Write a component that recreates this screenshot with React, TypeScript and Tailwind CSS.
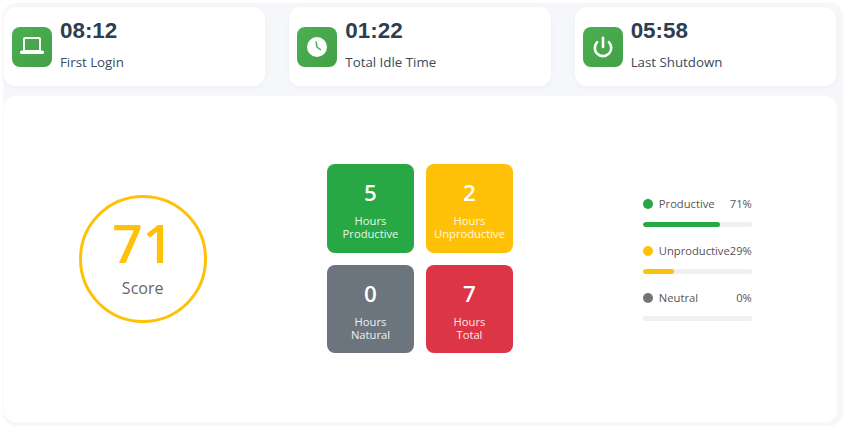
import { Power } from 'lucide-react';
import type { ReactNode } from 'react';

const sans = 'font-["Open_Sans",sans-serif]';

function LaptopIcon() {
  return (
    <svg width="24" height="24" viewBox="0 0 24 24" fill="none">
      <rect x="4" y="3" width="16" height="13" rx="1" stroke="white" strokeWidth="2" />
      <rect x="0" y="15.5" width="24" height="3.5" rx="1.5" fill="white" />
    </svg>
  );
}

function ClockIcon() {
  return (
    <svg width="20" height="20" viewBox="0 0 20 20" fill="none">
      <circle cx="10" cy="10" r="10" fill="white" />
      <path d="M9 4.5 L10 10 L14 13" stroke="#4caf50" strokeWidth="1.5" />
    </svg>
  );
}

function StatCard({ icon, time, label }: { icon: ReactNode; time: string; label: string }) {
  return (
    <div className="h-[79px] bg-white rounded-xl shadow-[0_2px_6px_rgba(0,0,0,0.03)] pl-2 flex items-start">
      <div className="mt-5 w-10 h-10 rounded-lg bg-gradient-to-br from-[#4caf50] to-[#43a047] flex items-center justify-center text-white shrink-0">
        {icon}
      </div>
      <div className="ml-2">
        <div className='mt-[9px] h-[30px] font-["Liberation_Sans",sans-serif] font-bold text-[22.4px] leading-[30px] text-[#2c3e50]'>{time}</div>
        <div className="mt-[7px] text-[13.3px] leading-[18px] font-medium text-[#3b4a5a]">{label}</div>
      </div>
    </div>
  );
}

function HourBox({ value, label, sub, color }: { value: string; label: string; sub: string; color: string }) {
  return (
    <div className={`rounded-lg ${color} text-white text-center flex flex-col items-center pt-[14px]`}>
      <div className="text-[22.4px] leading-[30px] font-semibold">{value}</div>
      <div className="mt-[6px] text-[11.2px] leading-[13.44px] font-medium opacity-90">
        {label}
        <br />
        {sub}
      </div>
    </div>
  );
}

function LegendRow({ dot, name, pct, bar, width }: { dot: string; name: string; pct: string; bar: string; width: string }) {
  return (
    <div>
      <div className="flex items-center h-4 text-[11.2px] text-[#555]">
        <span className={`w-[10px] h-[10px] rounded-full ${dot} mr-[6px] shrink-0`} />
        <span className="flex-1">{name}</span>
        <span>{pct}</span>
      </div>
      <div className="mt-[10px] h-[5px] rounded-[3px] bg-[#f0f0f0] overflow-hidden">
        <div className={`h-full rounded-[3px] ${bar} ${width}`} />
      </div>
    </div>
  );
}

export default function App() {
  return (
    <div className={`w-[846px] h-[431px] bg-white pt-[3px] pl-[4px] ${sans}`}>
      <div className="w-[838px] h-[421px] bg-[#f5f7fa] rounded-xl shadow-[0_1px_3px_rgba(0,0,0,0.06)] pt-1 flex flex-col">
        <div className="grid grid-cols-3 gap-6 w-[832px]">
          <StatCard icon={<LaptopIcon />} time="08:12" label="First Login" />
          <StatCard icon={<ClockIcon />} time="01:22" label="Total Idle Time" />
          <StatCard icon={<Power size={22} strokeWidth={2.8} />} time="05:58" label="Last Shutdown" />
        </div>
        <div className="mt-[10px] w-[833px] h-[326px] pr-[1px] bg-white rounded-xl grid grid-cols-3 items-center justify-items-center">
          <div className="w-32 h-32 rounded-full border-[3px] border-[#ffc107] flex flex-col items-center">
            <div className="mt-[11px] text-[53px] leading-[68px] font-semibold text-[#ffc107]">71</div>
            <div className="text-base leading-[22px] text-[#666]">Score</div>
          </div>
          <div className="mb-[1px] grid grid-cols-[87px_87px] grid-rows-[89px_88px] gap-3">
            <HourBox value="5" label="Hours" sub="Productive" color="bg-[#28a745]" />
            <HourBox value="2" label="Hours" sub="Unproductive" color="bg-[#ffc107]" />
            <HourBox value="0" label="Hours" sub="Natural" color="bg-[#6c757d]" />
            <HourBox value="7" label="Hours" sub="Total" color="bg-[#dc3545]" />
          </div>
          <div className="mb-[1px] w-[109px] flex flex-col gap-4">
            <LegendRow dot="bg-[#28a745]" name="Productive" pct="71%" bar="bg-[#28a745]" width="w-[71%]" />
            <LegendRow dot="bg-[#ffc107]" name="Unproductive" pct="29%" bar="bg-[#ffc107]" width="w-[29%]" />
            <LegendRow dot="bg-[#757575]" name="Neutral" pct="0%" bar="bg-[#6c757d]" width="w-0" />
          </div>
        </div>
      </div>
    </div>
  );
}
